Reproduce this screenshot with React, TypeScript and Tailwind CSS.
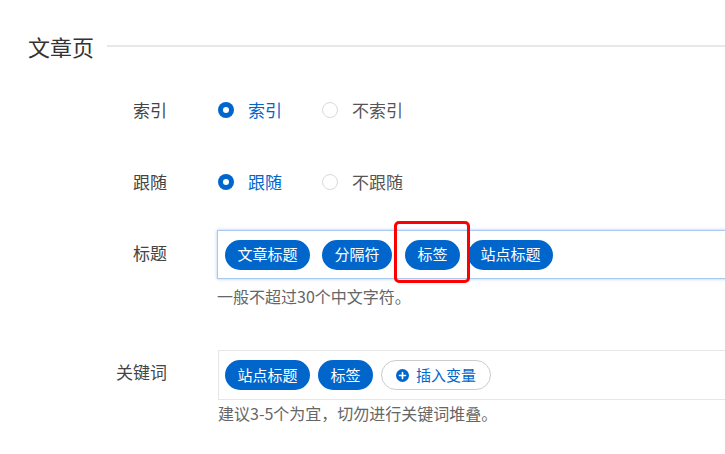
import React from 'react';

const font = { fontFamily: '"Noto Sans CJK SC", "Noto Sans", sans-serif' };

const Radio: React.FC<{ checked?: boolean; label: string }> = ({ checked, label }) => (
  <label className="flex items-center mr-[40px]">
    {checked ? (
      <span className="w-[16px] h-[16px] rounded-full bg-[#0066cc] flex items-center justify-center">
        <span className="w-[6px] h-[6px] rounded-full bg-white" />
      </span>
    ) : (
      <span className="w-[16px] h-[16px] rounded-full border border-[#d9d9e0] bg-white" />
    )}
    <span className={`ml-[14px] text-[17px] ${checked ? 'text-[#0066cc]' : 'text-[#555]'}`}>{label}</span>
  </label>
);

const Tag: React.FC<{ children: React.ReactNode }> = ({ children }) => (
  <span className="h-[30px] px-[12.5px] rounded-full bg-[#0066cc] text-white text-[15px] flex items-center whitespace-nowrap">
    {children}
  </span>
);

const App: React.FC = () => {
  return (
    <div className="w-[725px] h-[454px] overflow-hidden bg-white text-[#333]" style={font}>
      {/* Section heading */}
      <div className="flex items-center pt-[30px] pl-[28px]">
        <h2 className="text-[22px] leading-[32px] text-[#333]">文章页</h2>
        <div className="flex-1 h-[2px] bg-[#e8e8e8] ml-[13px]" />
      </div>

      {/* Index */}
      <div className="flex mt-[32px] leading-[32px]">
        <div className="w-[167px] shrink-0 text-right text-[17px] text-[#444]">索引</div>
        <div className="flex items-center ml-[51px]">
          <Radio checked label="索引" />
          <Radio label="不索引" />
        </div>
      </div>

      {/* Follow */}
      <div className="flex mt-[40px] leading-[32px]">
        <div className="w-[167px] shrink-0 text-right text-[17px] text-[#444]">跟随</div>
        <div className="flex items-center ml-[51px]">
          <Radio checked label="跟随" />
          <Radio label="不跟随" />
        </div>
      </div>

      {/* Title */}
      <div className="flex mt-[32px]">
        <div className="w-[167px] shrink-0 text-right text-[17px] text-[#444] leading-[32px] mt-[7px]">标题</div>
        <div className="ml-[50px] shrink-0">
          <div className="w-[600px] h-[49px] border border-[#a9c9ee] shadow-[0_0_3px_rgba(0,102,204,0.35)] flex items-center gap-[12px] px-[7px]">
            <Tag>文章标题</Tag>
            <Tag>分隔符</Tag>
            <span className="relative ml-[1px] mr-[-4px]">
              <Tag>标签</Tag>
              <span className="absolute left-[-11px] right-[-10px] top-[-19px] bottom-[-13px] border-[3px] border-[#ff0000] rounded-[5px]" />
            </span>
            <Tag>站点标题</Tag>
          </div>
          <p className="text-[16px] text-[#666] leading-[20px] mt-[7px]">一般不超过30个中文字符。</p>
        </div>
      </div>

      {/* Keywords */}
      <div className="flex mt-[44px]">
        <div className="w-[167px] shrink-0 text-right text-[17px] text-[#444] leading-[32px] mt-[6px]">关键词</div>
        <div className="ml-[51px] shrink-0">
          <div className="w-[600px] h-[50px] border border-[#e6e6e6] flex items-center gap-[8px] px-[6px]">
            <Tag>站点标题</Tag>
            <Tag>标签</Tag>
            <button className="h-[30px] pl-[14px] pr-[14px] rounded-full border border-[#cccccc] bg-white flex items-center text-[15px] text-[#0066cc] whitespace-nowrap">
              <svg width="13" height="13" viewBox="0 0 14 14" className="mr-[7px]">
                <circle cx="7" cy="7" r="7" fill="#0066cc" />
                <path d="M7 3.8v6.4M3.8 7h6.4" stroke="#fff" strokeWidth="1.8" strokeLinecap="round" />
              </svg>
              插入变量
            </button>
          </div>
          <p className="text-[16px] text-[#666] leading-[20px] mt-[3px]">建议3-5个为宜，切勿进行关键词堆叠。</p>
        </div>
      </div>
    </div>
  );
};

export default App;
